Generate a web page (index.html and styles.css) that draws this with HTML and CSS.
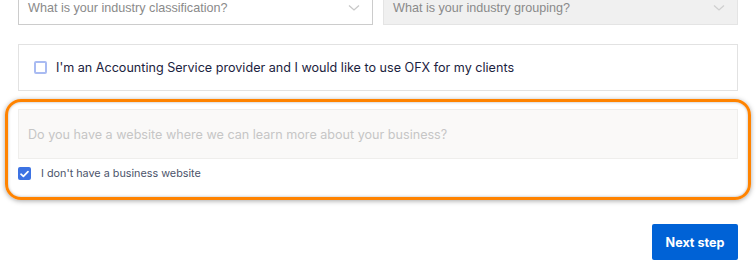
FILE: index.html
```html
<!DOCTYPE html>
<html lang="en">
<head>
<meta charset="utf-8">
<link rel="stylesheet" href="styles.css">
</head>
<body>
<div class="page">
  <div class="selects">
    <div class="select">
      <span>What is your industry classification?</span>
      <svg class="chev" width="12" height="8" viewBox="0 0 12 8"><path d="M1 1.5 L6 6 L11 1.5" fill="none" stroke="#c8c8c8" stroke-width="1.3"/></svg>
    </div>
    <div class="select disabled">
      <span>What is your industry grouping?</span>
      <svg class="chev" width="12" height="8" viewBox="0 0 12 8"><path d="M1 1.5 L6 6 L11 1.5" fill="none" stroke="#cfcfcf" stroke-width="1.3"/></svg>
    </div>
  </div>
  <div class="card">
    <span class="box"></span>
    <span class="card-label">I'm an Accounting Service provider and I would like to use OFX for my clients</span>
  </div>
  <div class="highlight">
    <div class="input">Do you have a website where we can learn more about your business?</div>
    <div class="check-row">
      <span class="box checked"><svg width="9" height="8" viewBox="0 0 9 8"><path d="M1 4.2 L3.4 6.4 L8 1.6" fill="none" stroke="#fff" stroke-width="1.7" stroke-linecap="round" stroke-linejoin="round"/></svg></span>
      <span class="small-label">I don't have a business website</span>
    </div>
  </div>
  <div class="actions">
    <button class="next">Next step</button>
  </div>
</div>
</body>
</html>
```
FILE: styles.css
```css
* { box-sizing: border-box; }
html, body { margin: 0; padding: 0; background: #fff; }
body { font-family: Inter, "Noto Sans", sans-serif; }
.page { padding: 0 18px; width: 756px; }
.selects { display: flex; gap: 10px; margin-top: -9px; }
.select {
  flex: 1; height: 34px; border: 1px solid #cccccc; background: #fff;
  display: flex; align-items: center; justify-content: space-between;
  padding: 0 12px 0 9px;
  font-family: "Liberation Sans", Arial, sans-serif; font-size: 12.6px; color: #8a8a8a;
}
.select.disabled { background: #f0f0f0; border-color: #e4e4e4; }
.chev { display: block; }
.card {
  margin-top: 19px; height: 47px; border: 1px solid #e2e2e2;
  display: flex; align-items: center; padding-left: 15px; gap: 9px;
}
.box {
  width: 13px; height: 13px; border: 2px solid #a9bbf2; border-radius: 2px;
  display: flex; align-items: center; justify-content: center; flex: none;
}
.box.checked { background: #3d73e3; border: none; border-radius: 2px; }
.card-label { font-size: 12.6px; color: #1c2340; }
.highlight {
  margin: 8px -13px 0; border: 3px solid #ff8300; border-radius: 16px;
  padding: 7px 10px 17px;
  box-shadow: 0 1px 5px rgba(0,0,0,0.35), inset 0 0 3px rgba(0,0,0,0.3);
}
.input {
  height: 50px; background: #faf9f8; border: 1px solid #efeeec;
  display: flex; align-items: center; padding-left: 9px;
  font-size: 12.6px; color: #c6c6c6;
}
.check-row { display: flex; align-items: center; gap: 10px; margin-top: 8px; }
.small-label { font-size: 10.8px; color: #4b536a; }
.actions { display: flex; justify-content: flex-end; margin-top: 24px; }
.next {
  width: 86px; height: 36px; border: none; border-radius: 2px;
  background: #0062d6; color: #fff; font-family: Inter, sans-serif;
  font-weight: 700; font-size: 12.6px; padding: 0;
}
```
